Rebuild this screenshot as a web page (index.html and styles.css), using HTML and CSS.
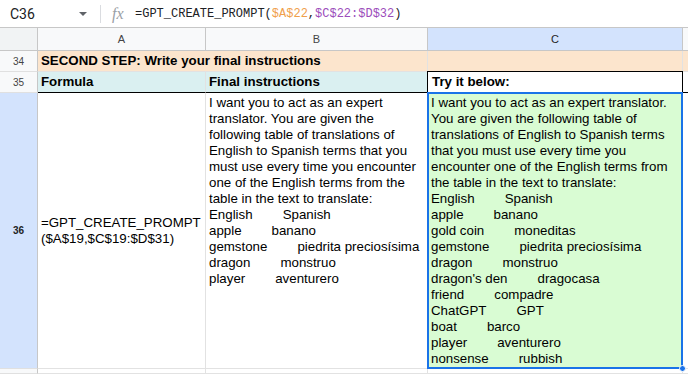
FILE: index.html
```html
<!DOCTYPE html>
<html lang="en">
<head>
  <meta charset="UTF-8" />
  <title>Sheet</title>
  <link rel="stylesheet" href="styles.css">
</head>
<body>
  <div class="formula-bar">
    <div class="name-box">C36</div>
    <span class="caret"></span>
    <span class="divider"></span>
    <span class="fx">fx</span>
    <div class="formula">=GPT_CREATE_PROMPT(<span class="ref-a">$A$22</span>,<span class="ref-c">$C$22:$D$32</span>)</div>
  </div>

  <div class="sheet">
    <!-- column headers -->
    <div class="corner"></div>
    <div class="col-head">A</div>
    <div class="col-head">B</div>
    <div class="col-head selected">C</div>
    <div class="col-head"></div>

    <!-- row 34 -->
    <div class="row-head">34</div>
    <div class="cell peach bold span-2">SECOND STEP: Write your final instructions</div>
    <div class="cell peach"></div>
    <div class="cell peach"></div>

    <!-- row 35 -->
    <div class="row-head">35</div>
    <div class="cell cyan bold under">Formula</div>
    <div class="cell cyan bold under">Final instructions</div>
    <div class="cell bold boxed">Try it below:</div>
    <div class="cell under"></div>

    <!-- row 36 -->
    <div class="row-head selected">36</div>
    <div class="cell middle">=GPT_CREATE_PROMPT<br>($A$19,$C$19:$D$31)</div>
    <div class="cell top">I want you to act as an expert<br>translator. You are given the<br>following table of translations of<br>English to Spanish terms that you<br>must use every time you encounter<br>one of the English terms from the<br>table in the text to translate:<br>English<span class="tab"></span>Spanish<br>apple<span class="tab"></span>banano<br>gemstone<span class="tab"></span>piedrita preciosísima<br>dragon<span class="tab"></span>monstruo<br>player<span class="tab"></span>aventurero</div>
    <div class="cell top green active">I want you to act as an expert translator.<br>You are given the following table of<br>translations of English to Spanish terms<br>that you must use every time you<br>encounter one of the English terms from<br>the table in the text to translate:<br>English<span class="tab"></span>Spanish<br>apple<span class="tab"></span>banano<br>gold coin<span class="tab"></span>moneditas<br>gemstone<span class="tab"></span>piedrita preciosísima<br>dragon<span class="tab"></span>monstruo<br>dragon's den<span class="tab"></span>dragocasa<br>friend<span class="tab"></span>compadre<br>ChatGPT<span class="tab"></span>GPT<br>boat<span class="tab"></span>barco<br>player<span class="tab"></span>aventurero<br>nonsense<span class="tab"></span>rubbish<span class="handle"></span></div>
    <div class="cell"></div>

    <!-- row 37 -->
    <div class="row-head"></div>
    <div class="cell"></div>
    <div class="cell"></div>
    <div class="cell"></div>
    <div class="cell"></div>
  </div>
</body>
</html>
```

FILE: styles.css
```css
:root {
  --grid: #e2e2e2;
  --head: #f8f9fa;
  --head-line: #c7c7c7;
  --select: #d3e3fd;
  --blue: #1a73e8;
  --peach: #fce5cd;
  --cyan: #daf0f1;
  --green: #d9fcd3;
}

* {
  margin: 0;
  padding: 0;
  box-sizing: border-box;
}

body {
  width: 688px;
  height: 374px;
  overflow: hidden;
  background: #fff;
  font-family: 'Liberation Sans', Arial, sans-serif;
  color: #000;
}

.formula-bar {
  height: 28px;
  border-bottom: 1px solid var(--head-line);
  display: flex;
  align-items: center;
  color: #202124;
}

.name-box {
  font-family: Roboto, 'Liberation Sans', sans-serif;
  font-size: 14px;
  padding-left: 10px;
  width: 79px;
}

.caret {
  width: 0;
  height: 0;
  border-left: 4px solid transparent;
  border-right: 4px solid transparent;
  border-top: 4px solid #5f6368;
  margin-top: 1px;
}

.divider {
  width: 1px;
  height: 18px;
  background: #dadce0;
  margin-left: 13px;
}

.fx {
  font-family: 'Liberation Serif', serif;
  font-style: italic;
  font-size: 16px;
  color: #9aa0a6;
  margin-left: 11px;
  width: 23px;
}

.formula {
  font-family: 'Liberation Mono', monospace;
  font-size: 12px;
  color: #202124;
}

.ref-a {
  color: #f0a04b;
}

.ref-c {
  color: #9c4dbb;
}

.sheet {
  display: grid;
  grid-template-columns: 38px 168px 222px 255px 1fr;
  grid-template-rows: 23px 21px 21px 276px 1fr;
  height: 346px;
}

.corner,
.col-head,
.row-head {
  background: var(--head);
  border-right: 1px solid var(--head-line);
  border-bottom: 1px solid var(--head-line);
  font-size: 10px;
  color: #444;
  display: flex;
  align-items: center;
  justify-content: center;
}

.corner {
  background: #f1f3f4;
}

.col-head {
  font-size: 11px;
}

.row-head {
  border-bottom: 1px solid #e0e0e0;
}

.selected {
  background: var(--select);
  color: #1f1f1f;
}

.row-head.selected {
  font-weight: bold;
}

.cell {
  border-right: 1px solid var(--grid);
  border-bottom: 1px solid var(--grid);
  font-size: 13.3px;
  line-height: 16px;
  padding: 0 3px;
  white-space: nowrap;
  display: flex;
  align-items: flex-end;
  padding-bottom: 2px;
}

.cell.top,
.cell.middle {
  display: block;
  padding-top: 2px;
}

.cell.middle {
  display: flex;
  align-items: center;
  padding-top: 0;
  padding-bottom: 0;
}

.span-2 {
  grid-column: span 2;
}

.bold {
  font-weight: bold;
}

.peach {
  background: var(--peach);
}

.cyan {
  background: var(--cyan);
}

.green {
  background: var(--green);
}

.under {
  border-bottom: 1px solid #000;
}

.boxed {
  border: 1px solid #000;
  margin-left: -1px;
  margin-top: -1px;
  padding-left: 4px;
}

.tab {
  display: inline-block;
  width: 30px;
}

.active {
  position: relative;
}

.active::after {
  content: "";
  position: absolute;
  inset: -1px -1px -1px -1px;
  border: 2px solid var(--blue);
  pointer-events: none;
}

.handle {
  position: absolute;
  right: -4px;
  bottom: -4px;
  width: 7px;
  height: 7px;
  border-radius: 50%;
  background: var(--blue);
  border: 1px solid #fff;
  z-index: 2;
}
```
